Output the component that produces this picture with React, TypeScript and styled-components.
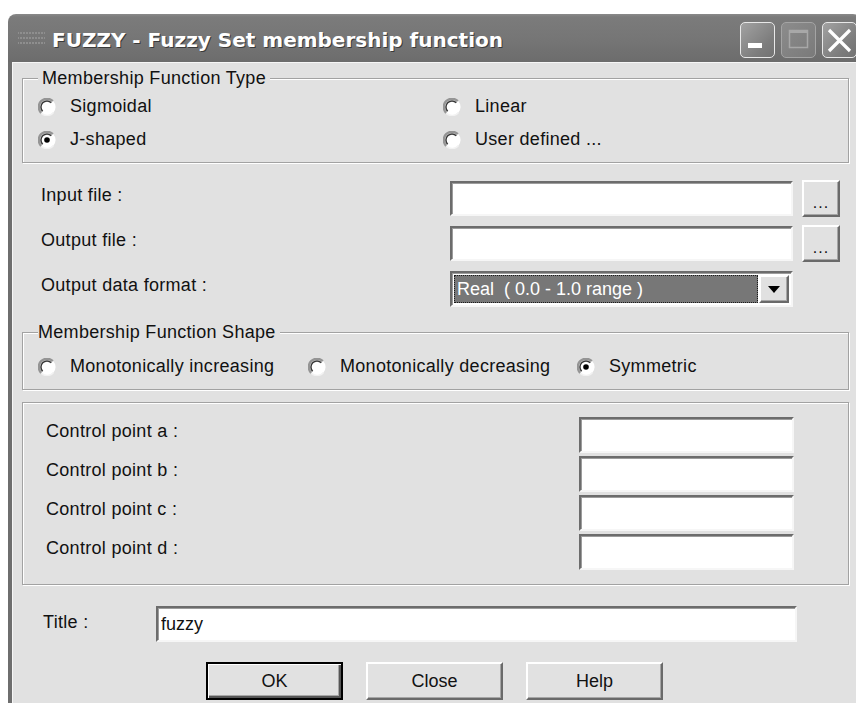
import React from "react";
import styled, { createGlobalStyle } from "styled-components";

const GlobalStyle = createGlobalStyle`
  html, body {
    margin: 0;
    padding: 0;
    background: #ffffff;
    overflow: hidden;
  }
  body {
    font-family: "Liberation Sans", Arial, sans-serif;
  }
`;

const FACE = "#e1e1e1";

const RadioIcon = ({ checked }: { checked?: boolean }) => (
  <svg width="18" height="18" viewBox="0 0 18 18">
    <circle cx="9" cy="9" r="8.6" fill="#ffffff" />
    <path d="M15.4 14.4 A8 8 0 0 1 3.6 15.4" stroke="#f2f2f2" strokeWidth="1.6" fill="none" />
    <path d="M3.2 14.8 A8.1 8.1 0 0 1 14.8 3.2" stroke="#959595" strokeWidth="2.4" fill="none" />
    <path d="M4.7 13.3 A6 6 0 0 1 13.3 4.7" stroke="#3a3a3a" strokeWidth="1.5" fill="none" />
    {checked && <circle cx="9" cy="9" r="2.8" fill="#000000" />}
  </svg>
);

const Radio = ({ label, checked }: { label: string; checked?: boolean }) => (
  <RadioLabel>
    <RadioIcon checked={checked} />
    <span>{label}</span>
  </RadioLabel>
);

const App = () => {
  const points = ["a", "b", "c", "d"];

  return (
    <>
      <GlobalStyle />
      <Window>
        <TitleBar>
          <AppIcon width="27" height="16" viewBox="0 0 27 16">
            {Array.from({ length: 30 }).map((_, i) => (
              <rect key={i} x={(i % 10) * 3 - 1} y={Math.floor(i / 10) * 5 + 1} width="2" height="2" fill="#8e8e8e" />
            ))}
          </AppIcon>
          <Caption>FUZZY - Fuzzy Set membership function</Caption>
          <CaptionButtons>
            <CaptionButton $tone="active">
              <svg width="35" height="36" viewBox="0 0 35 36">
                <rect x="8" y="21" width="14" height="5" fill="#ffffff" />
              </svg>
            </CaptionButton>
            <CaptionButton $tone="dim">
              <svg width="35" height="36" viewBox="0 0 35 36">
                <rect x="8.5" y="8.5" width="18" height="17" fill="none" stroke="#a8a8a8" strokeWidth="1.5" />
                <rect x="8" y="8" width="19" height="3" fill="#a8a8a8" />
              </svg>
            </CaptionButton>
            <CaptionButton $tone="active">
              <svg width="35" height="36" viewBox="0 0 35 36">
                <path d="M7 8 L28 29 M28 8 L7 29" stroke="#ffffff" strokeWidth="3.2" />
              </svg>
            </CaptionButton>
          </CaptionButtons>
        </TitleBar>

        <Client>
          <GroupBox>
            <Legend $pad={4}>Membership Function Type</Legend>
            <TypeGrid>
              <Radio label="Sigmoidal" />
              <Radio label="Linear" />
              <Radio label="J-shaped" checked />
              <Radio label="User defined ..." />
            </TypeGrid>
          </GroupBox>

          <FileGrid>
            <FieldLabel>Input file :</FieldLabel>
            <TextField />
            <BrowseButton>...</BrowseButton>

            <FieldLabel>Output file :</FieldLabel>
            <TextField />
            <BrowseButton>...</BrowseButton>

            <FieldLabel>Output data format :</FieldLabel>
            <Combo>
              <ComboValue>Real  ( 0.0 - 1.0 range )</ComboValue>
              <ComboArrow>
                <svg width="12" height="7" viewBox="0 0 12 7">
                  <path d="M0 0 H12 L6 7 Z" fill="#000000" />
                </svg>
              </ComboArrow>
            </Combo>
          </FileGrid>

          <GroupBox $top={15}>
            <Legend $pad={0}>Membership Function Shape</Legend>
            <ShapeGrid>
              <Radio label="Monotonically increasing" />
              <Radio label="Monotonically decreasing" />
              <Radio label="Symmetric" checked />
            </ShapeGrid>
          </GroupBox>

          <PointsPanel>
            {points.map((p) => (
              <React.Fragment key={p}>
                <FieldLabel>Control point {p} :</FieldLabel>
                <PointField />
              </React.Fragment>
            ))}
          </PointsPanel>

          <TitleRow>
            <TitleLabel>Title :</TitleLabel>
            <TitleField defaultValue="fuzzy" />
          </TitleRow>

          <ButtonRow>
            <PushButton $default>OK</PushButton>
            <PushButton>Close</PushButton>
            <PushButton>Help</PushButton>
          </ButtonRow>
        </Client>
      </Window>
    </>
  );
};

export default App;

const Window = styled.div`
  margin: 14px 0 0 8px;
  width: 853px;
`;

const TitleBar = styled.div`
  height: 48px;
  display: flex;
  align-items: center;
  padding-left: 10px;
  border-radius: 8px 8px 0 0;
  background: linear-gradient(#8a8a8a 0, #7b7b7b 3px, #767676 50%, #6c6c6c 100%);
`;

const AppIcon = styled.svg`
  flex: none;
  margin-top: 2px;
`;

const Caption = styled.div`
  margin-left: 7px;
  padding-top: 4px;
  font-family: "DejaVu Sans", Verdana, sans-serif;
  font-weight: 700;
  font-size: 20px;
  color: #ffffff;
  text-shadow: 1px 1px 0 #3a3a3a;
  white-space: nowrap;
`;

const CaptionButtons = styled.div`
  margin-left: auto;
  margin-top: 4px;
  padding-right: 4px;
  display: flex;
  gap: 6px;
`;

const CaptionButton = styled.div<{ $tone: "active" | "dim" }>`
  width: 35px;
  height: 36px;
  box-sizing: border-box;
  border-radius: 5px;
  border: 1.5px solid ${(p) => (p.$tone === "active" ? "#e8e8e8" : "#a4a4a4")};
  background: ${(p) =>
    p.$tone === "active"
      ? "linear-gradient(135deg, #a2a2a2, #7c7c7c 70%, #727272)"
      : "linear-gradient(135deg, #8c8c8c, #7a7a7a)"};
  display: flex;
  align-items: center;
  justify-content: center;
  overflow: hidden;

  svg {
    flex: none;
  }
`;

const Client = styled.div`
  min-height: 641px;
  box-sizing: border-box;
  border-left: 4px solid #6e6e6e;
  background: ${FACE};
  box-shadow: inset 1px 1px 0 #f6f6f6;
  padding: 6px 12px 0 10px;
  font-size: 18px;
  letter-spacing: 0.3px;
  color: #111111;
`;

const GroupBox = styled.fieldset<{ $top?: number }>`
  margin: ${(p) => p.$top ?? 0}px 0 0 0;
  padding: 1px 0 6px 15px;
  border: 1px solid #a2a2a2;
  box-shadow: inset 1px 1px 0 #ffffff, 1px 1px 0 #ffffff;
  min-width: 0;
`;

const Legend = styled.legend<{ $pad: number }>`
  padding: 0 4px 0 ${(p) => p.$pad}px;
  line-height: 21px;
  background: ${FACE};
`;

const TypeGrid = styled.div`
  display: grid;
  grid-template-columns: 405px 1fr;
  grid-auto-rows: 33px;
`;

const ShapeGrid = styled.div`
  display: grid;
  grid-template-columns: 270px 269px 1fr;
  grid-auto-rows: 33px;
  padding-top: 6px;
`;

const RadioLabel = styled.label`
  display: flex;
  align-items: center;
  gap: 14px;
  line-height: 21px;
  white-space: nowrap;

  svg {
    flex: none;
  }
`;

const FileGrid = styled.div`
  display: grid;
  grid-template-columns: 400px 343px 38px;
  grid-template-rows: 35px 35px 36px;
  column-gap: 9px;
  row-gap: 10px;
  margin: 18px 0 0 19px;
`;

const FieldLabel = styled.div`
  align-self: start;
  padding-top: 4px;
  line-height: 21px;
  white-space: nowrap;
`;

const sunken = `
  box-sizing: border-box;
  border: 2px solid;
  border-color: #6c6c6c #f6f6f6 #f6f6f6 #6c6c6c;
  box-shadow: inset 1px 1px 0 #9c9c9c;
  background: #ffffff;
`;

const raised = `
  box-sizing: border-box;
  border: 2px solid;
  border-color: #ffffff #6a6a6a #6a6a6a #ffffff;
  box-shadow: inset -1px -1px 0 #a6a6a6;
  background: ${FACE};
`;

const TextField = styled.input`
  ${sunken}
  width: 100%;
  height: 35px;
  margin: 0;
  padding: 0 5px;
  font: inherit;
  outline: none;
`;

const BrowseButton = styled.button`
  ${raised}
  width: 38px;
  height: 37px;
  margin: -1px 0 0;
  padding: 8px 0 0;
  font: inherit;
  font-size: 16px;
  letter-spacing: 1px;
  color: #111111;
`;

const Combo = styled.div`
  ${sunken}
  height: 36px;
  display: flex;
  align-items: stretch;
  padding: 2px;
  gap: 1px;
`;

const ComboValue = styled.div`
  flex: 1;
  display: flex;
  align-items: center;
  padding-left: 3px;
  background: #777777;
  color: #ffffff;
  letter-spacing: 0;
  outline: 1px dotted #1a1a1a;
  outline-offset: -1px;
  white-space: pre;
`;

const ComboArrow = styled.div`
  ${raised}
  width: 30px;
  display: flex;
  align-items: center;
  justify-content: center;
`;

const PointsPanel = styled.div`
  margin-top: 12px;
  padding: 14px 0 14px 23px;
  border: 1px solid #a2a2a2;
  box-shadow: inset 1px 1px 0 #ffffff, 1px 1px 0 #ffffff;
  display: grid;
  grid-template-columns: 533px 215px;
  grid-auto-rows: 36px;
  row-gap: 3px;
`;

const PointField = styled.input`
  ${sunken}
  width: 215px;
  height: 36px;
  margin: 0;
  font: inherit;
  outline: none;
`;

const TitleRow = styled.div`
  display: flex;
  align-items: center;
  margin: 21px 0 0 21px;
`;

const TitleLabel = styled.div`
  width: 113px;
  line-height: 21px;
  margin-top: -4px;
`;

const TitleField = styled.input`
  ${sunken}
  width: 641px;
  height: 36px;
  margin: 0;
  padding: 0 3px;
  font: inherit;
  color: #111111;
  outline: none;
`;

const ButtonRow = styled.div`
  display: flex;
  gap: 23px;
  margin: 20px 0 0 184px;
`;

const PushButton = styled.button<{ $default?: boolean }>`
  ${raised}
  width: 137px;
  height: 38px;
  margin: 0;
  padding: 0;
  font: inherit;
  color: #111111;
  ${(p) =>
    p.$default &&
    `
    border: 2px solid #000000;
    box-shadow: inset 1px 1px 0 #ffffff, inset -2px -2px 0 #555555, inset -3px -3px 0 #a6a6a6;
  `}
`;
